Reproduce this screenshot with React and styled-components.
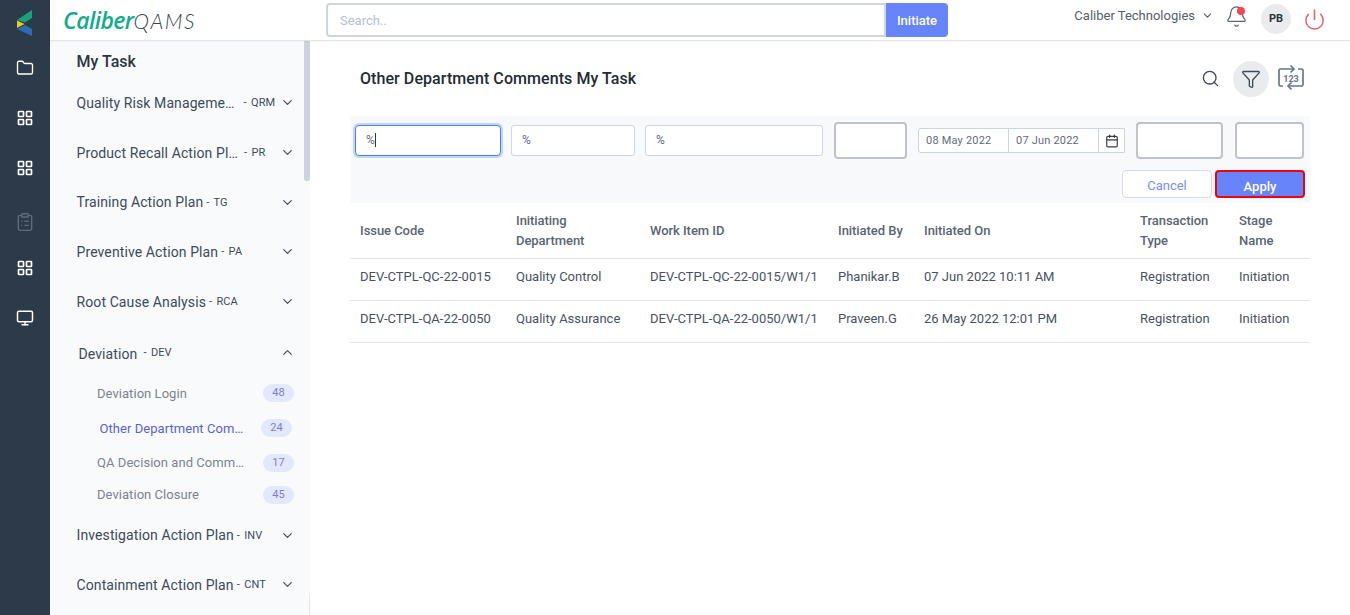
import styled, { createGlobalStyle } from 'styled-components';
import {
  Folder,
  ClipboardList,
  Monitor,
  ChevronDown,
  ChevronUp,
  Bell,
  Power,
  Search,
  Filter,
  Calendar
} from 'lucide-react';

const GlobalStyle = createGlobalStyle`
  html, body {
    margin: 0;
    height: 100%;
    overflow: hidden;
    background: #fff;
    font-family: Roboto, "Liberation Sans", sans-serif;
  }
  * { box-sizing: border-box; }
`;

const Page = styled.div`
  display: flex;
  width: 1350px;
  height: 615px;
  overflow: hidden;
`;

const Rail = styled.nav`
  flex: 0 0 50px;
  display: flex;
  flex-direction: column;
  align-items: center;
  background: #2c3a49;
  padding-top: 10px;
`;

const RailLogo = styled.svg`
  width: 16px;
  height: 26px;
  margin-bottom: 7px;
`;

const RailIcon = styled.div`
  height: 50px;
  display: flex;
  align-items: center;
  justify-content: center;
  padding-top: ${(p) => (p.$dim ? 8 : 0)}px;
  color: ${(p) => (p.$dim ? '#5f6c7a' : '#fff')};
`;

const Main = styled.div`
  flex: 1;
  display: flex;
  flex-direction: column;
  min-width: 0;
`;

const TopBar = styled.header`
  position: relative;
  z-index: 2;
  flex: 0 0 41px;
  display: flex;
  background: #fff;
  border-bottom: 1px solid #e3e5e8;
  box-shadow: 0 1px 2px rgba(0, 0, 0, 0.04);
`;

const Brand = styled.div`
  flex: 0 0 276px;
  padding: 6px 0 0 13px;
  font-size: 23px;
  line-height: 28px;
  font-style: italic;
  white-space: nowrap;
`;

const BrandName = styled.span`
  font-family: "Open Sans", sans-serif;
  font-weight: 600;
  color: #12ab8b;
  letter-spacing: -0.6px;
`;

const BrandProduct = styled.span`
  font-family: Lato, sans-serif;
  font-weight: 300;
  font-size: 21px;
  color: #39434d;
  letter-spacing: 1.6px;
`;

const SearchGroup = styled.div`
  display: flex;
  padding-top: 3px;
  height: 37px;
`;

const SearchField = styled.div`
  width: 560px;
  height: 34px;
  border: 2px solid #cdd6e3;
  border-radius: 4px 0 0 4px;
  padding-left: 12px;
  font-size: 13px;
  line-height: 31px;
  color: #b3c0d8;
`;

const InitiateButton = styled.button`
  width: 62px;
  height: 34px;
  border: 0;
  border-radius: 0 4px 4px 0;
  background: #6884fb;
  color: #fff;
  font: 500 13px Roboto, sans-serif;
`;

const TopRight = styled.div`
  margin-left: auto;
  display: flex;
  align-items: flex-start;
  padding: 4px 24px 0 0;
  color: #555e68;
`;

const Company = styled.div`
  display: flex;
  align-items: center;
  gap: 6px;
  height: 23px;
  font-size: 13px;
  margin-right: 12px;
`;

const BellWrap = styled.div`
  position: relative;
  display: flex;
  justify-content: center;
  width: 20px;
  height: 24px;
  margin: 1px 15px 0 0;
  color: #5b6570;
`;

const BellDot = styled.span`
  position: absolute;
  top: 2px;
  right: 1px;
  width: 8px;
  height: 8px;
  border-radius: 50%;
  background: #f4474f;
`;

const Avatar = styled.div`
  width: 30px;
  height: 30px;
  border-radius: 50%;
  background: #e9ebee;
  color: #2b3138;
  font-size: 11px;
  font-weight: 700;
  line-height: 30px;
  text-align: center;
  margin-right: 12px;
`;

const PowerWrap = styled.div`
  color: #e8606a;
  padding-top: 4px;
`;

const Body = styled.div`
  flex: 1;
  display: flex;
  min-height: 0;
`;

const Sidebar = styled.aside`
  position: relative;
  flex: 0 0 260px;
  background: #f9fafc;
  padding: 10px 0 0 26.5px;
  overflow: hidden;
`;

const ScrollThumb = styled.div`
  position: absolute;
  top: 0;
  right: 0;
  width: 6px;
  height: 140px;
  background: #ced2da;
  border-radius: 0 0 3px 3px;
`;

const SideHeading = styled.h2`
  margin: 0 0 6px;
  font-size: 16px;
  font-weight: 500;
  line-height: 21px;
  color: #2d3640;
`;

const Group = styled.div`
  display: flex;
  align-items: center;
  height: ${(p) => p.$h || 49.7}px;
  padding: 0 15px 0 ${(p) => p.$indent || 0}px;
  font-size: 14px;
  color: #3d4a5a;
  white-space: nowrap;
  letter-spacing: 0.1px;
`;

const GroupCode = styled.span`
  font-size: 11px;
  margin-left: ${(p) => p.$gap || 3}px;
  color: #3d4a5a;
  word-spacing: 1.5px;
`;

const GroupChevron = styled.span`
  margin-left: auto;
  display: flex;
  color: #445161;
`;

const DeviationLabel = styled.span`
  padding-top: 3px;
`;

const SubList = styled.div`
  margin-top: -2px;
`;

const SubItem = styled.div`
  display: flex;
  align-items: center;
  height: ${(p) => p.$h}px;
  padding-left: ${(p) => (p.$active ? 23 : 20.5)}px;
  padding-right: ${(p) => (p.$active ? 18 : 16)}px;
  font-size: 13px;
  color: ${(p) => (p.$active ? '#5a62d8' : '#7b8390')};
  white-space: nowrap;
`;

const SubLabel = styled.span`
  flex: 1;
  letter-spacing: 0.05px;
`;

const Count = styled.span`
  width: 31px;
  height: 18px;
  border-radius: 9px;
  background: #e3e8fb;
  color: #7b80cf;
  font-size: 11px;
  line-height: 17px;
  text-align: center;
`;

const Content = styled.main`
  flex: 1;
  padding: 0 40px 0 40px;
  min-width: 0;
`;

const TitleRow = styled.div`
  display: flex;
  align-items: center;
  height: 75px;
  padding: 0 5px 0 10px;
`;

const Title = styled.h1`
  margin: 0;
  font-size: 16px;
  font-weight: 500;
  color: #232b33;
  letter-spacing: 0.07px;
`;

const TitleTools = styled.div`
  margin-left: auto;
  display: flex;
  align-items: center;
  color: #3f4a57;
`;

const ToolCircle = styled.div`
  width: 36px;
  height: 36px;
  margin: 0 8px 0 13px;
  border-radius: 50%;
  background: #e9ecef;
  display: flex;
  align-items: center;
  justify-content: center;
`;

const FilterPanel = styled.section`
  background: #f8f9fb;
  height: 87px;
  padding: 6px 5px 5px 5px;
  display: flex;
  flex-direction: column;
`;

const FilterRow = styled.div`
  display: flex;
  align-items: center;
  height: 37px;
`;

const TextInput = styled.div`
  width: ${(p) => p.$w}px;
  height: 31px;
  margin-right: ${(p) => p.$gap || 10}px;
  padding-left: 10px;
  background: #fff;
  border: 1px solid #cfd6e3;
  border-radius: 3px;
  font-size: 12px;
  line-height: 29px;
  color: #5f6c80;
`;

const FocusedInput = styled(TextInput)`
  border-color: #5a7bea;
  box-shadow: 0 0 0 2px #bcd8fb;
  border-radius: 4px;
`;

const Caret = styled.span`
  display: inline-block;
  width: 1px;
  height: 14px;
  background: #333;
  vertical-align: -3px;
`;

const SelectBox = styled.div`
  width: ${(p) => p.$w}px;
  height: 37px;
  margin-right: ${(p) => p.$gap}px;
  background: #fff;
  border: 2px solid #bfc3c8;
  border-radius: 4px;
`;

const DateRange = styled.div`
  display: flex;
  width: 207px;
  height: 25px;
  margin-right: 11px;
  background: #fff;
  border: 1px solid #c9d4e4;
  border-radius: 3px 0 0 3px;
  font-size: 11px;
  line-height: 23px;
  color: #5f6c80;
  letter-spacing: 0.2px;
`;

const DateCell = styled.span`
  flex: 0 0 90px;
  padding-left: 7px;
  border-right: 1px solid #c9d4e4;
`;

const DateIcon = styled.span`
  flex: 1;
  display: flex;
  align-items: center;
  justify-content: center;
  color: #333b45;
`;

const ActionRow = styled.div`
  display: flex;
  justify-content: flex-end;
  gap: 3px;
  margin-top: 11px;
`;

const CancelButton = styled.button`
  width: 90px;
  height: 28px;
  padding-top: 4px;
  background: #fff;
  border: 1px solid #d3dbe8;
  border-radius: 4px;
  color: #7e8cf4;
  font: 13px Roboto, sans-serif;
`;

const ApplyButton = styled.button`
  width: 90px;
  height: 28px;
  padding-top: 5px;
  background: #6884fb;
  border: 2px solid #f0000f;
  border-radius: 4px;
  color: #fff;
  font: 500 13px Roboto, sans-serif;
`;

const Table = styled.table`
  width: 960px;
  table-layout: fixed;
  border-collapse: collapse;
  font-size: 13px;
`;

const Th = styled.th`
  height: 55px;
  padding: 2px 4px 0 10px;
  text-align: left;
  font-weight: 500;
  line-height: 20px;
  color: #5a6573;
  letter-spacing: -0.05px;
  border-bottom: 1px solid #e3e6ea;
`;

const Td = styled.td`
  height: 42px;
  padding: 0 0 6px 10px;
  color: #48525f;
  white-space: nowrap;
  border-bottom: 1px solid #e3e6ea;
`;

const CornerLine = styled.div`
  position: absolute;
  right: 0;
  bottom: 0;
  width: 1px;
  height: 20px;
  background: #e3e5e8;
`;

function GridIcon() {
  return (
    <svg width="16" height="16" viewBox="0 0 16 16" fill="none" stroke="#fff" strokeWidth="1.7">
      <rect x="1.5" y="1.5" width="5" height="5" rx="0.6" />
      <rect x="9.5" y="1.5" width="5" height="5" rx="0.6" />
      <rect x="1.5" y="9.5" width="5" height="5" rx="0.6" />
      <rect x="9.5" y="9.5" width="5" height="5" rx="0.6" />
    </svg>
  );
}

function CounterIcon() {
  return (
    <svg width="28" height="28" viewBox="0 0 28 28" fill="none" stroke="#66778c" strokeWidth="1.7">
      <path d="M6 21H3.5A1.5 1.5 0 0 1 2 19.5V5.5A1.5 1.5 0 0 1 3.5 4H17" />
      <path d="M13.5 0.5L17 4l-3.5 3.5" />
      <path d="M21 4h3.5A1.5 1.5 0 0 1 26 5.5v14a1.5 1.5 0 0 1-1.5 1.5H11" />
      <path d="M14.5 17.5L11 21l3.5 3.5" />
      <text x="14" y="16.5" textAnchor="middle" fontSize="9" fontFamily="Roboto, sans-serif" fill="#66778c" stroke="none" fontWeight="700">
        123
      </text>
    </svg>
  );
}

const groupsTop = [
  ['Quality Risk Manageme…', '- QRM', 9],
  ['Product Recall Action Pl…', '- PR', 6],
  ['Training Action Plan', '- TG', 3],
  ['Preventive Action Plan', '- PA', 3],
  ['Root Cause Analysis', '- RCA', 3]
];

const subItems = [
  { label: 'Deviation Login', count: 48, h: 34 },
  { label: 'Other Department Com…', count: 24, h: 36, active: true },
  { label: 'QA Decision and Comm…', count: 17, h: 33 },
  { label: 'Deviation Closure', count: 45, h: 31 }
];

const rows = [
  ['DEV-CTPL-QC-22-0015', 'Quality Control', 'DEV-CTPL-QC-22-0015/W1/1', 'Phanikar.B', '07 Jun 2022 10:11 AM', 'Registration', 'Initiation'],
  ['DEV-CTPL-QA-22-0050', 'Quality Assurance', 'DEV-CTPL-QA-22-0050/W1/1', 'Praveen.G', '26 May 2022 12:01 PM', 'Registration', 'Initiation']
];

const colWidths = [156, 134, 188, 86, 216, 99, 81];

export default function App() {
  return (
    <Page>
      <GlobalStyle />
      <Rail>
        <RailLogo viewBox="0 0 16 26">
          <polygon points="15,0 15,8 8,12.5 0,10" fill="#1aa37a" />
          <polygon points="0,10.5 7.5,14 0,18" fill="#f2c81e" />
          <polygon points="0,19 8,15 15,19 15,26" fill="#2a6db5" />
        </RailLogo>
        <RailIcon><Folder size={18} strokeWidth={1.8} /></RailIcon>
        <RailIcon><GridIcon /></RailIcon>
        <RailIcon><GridIcon /></RailIcon>
        <RailIcon $dim><ClipboardList size={20} strokeWidth={1.7} /></RailIcon>
        <RailIcon><GridIcon /></RailIcon>
        <RailIcon><Monitor size={18} strokeWidth={2} /></RailIcon>
      </Rail>
      <Main>
        <TopBar>
          <Brand>
            <BrandName>Caliber</BrandName>
            <BrandProduct>QAMS</BrandProduct>
          </Brand>
          <SearchGroup>
            <SearchField>Search..</SearchField>
            <InitiateButton>Initiate</InitiateButton>
          </SearchGroup>
          <TopRight>
            <Company>
              Caliber Technologies
              <ChevronDown size={13} />
            </Company>
            <BellWrap>
              <Bell size={23} strokeWidth={1.3} style={{ flexShrink: 0 }} />
              <BellDot />
            </BellWrap>
            <Avatar>PB</Avatar>
            <PowerWrap><Power size={23} strokeWidth={1.6} /></PowerWrap>
          </TopRight>
        </TopBar>
        <Body>
          <Sidebar>
            <ScrollThumb />
            <SideHeading>My Task</SideHeading>
            {groupsTop.map(([name, code, gap]) => (
              <Group key={code}>
                {name}
                <GroupCode $gap={gap}>{code}</GroupCode>
                <GroupChevron><ChevronDown size={15} /></GroupChevron>
              </Group>
            ))}
            <Group $indent={2} $h={52}>
              <DeviationLabel>Deviation</DeviationLabel>
              <GroupCode $gap={6}>- DEV</GroupCode>
              <GroupChevron><ChevronUp size={15} /></GroupChevron>
            </Group>
            <SubList>
              {subItems.map((item) => (
                <SubItem key={item.label} $h={item.h} $active={item.active}>
                  <SubLabel>{item.label}</SubLabel>
                  <Count>{item.count}</Count>
                </SubItem>
              ))}
            </SubList>
            <Group>
              Investigation Action Plan
              <GroupCode>- INV</GroupCode>
              <GroupChevron><ChevronDown size={15} /></GroupChevron>
            </Group>
            <Group>
              Containment Action Plan
              <GroupCode>- CNT</GroupCode>
              <GroupChevron><ChevronDown size={15} /></GroupChevron>
            </Group>
            <CornerLine />
          </Sidebar>
          <Content>
            <TitleRow>
              <Title>Other Department Comments My Task</Title>
              <TitleTools>
                <Search size={19} strokeWidth={1.7} />
                <ToolCircle><Filter size={20} strokeWidth={1.6} /></ToolCircle>
                <CounterIcon />
              </TitleTools>
            </TitleRow>
            <FilterPanel>
              <FilterRow>
                <FocusedInput $w={146}>%<Caret /></FocusedInput>
                <TextInput $w={124}>%</TextInput>
                <TextInput $w={178} $gap={11}>%</TextInput>
                <SelectBox $w={73} $gap={11} />
                <DateRange>
                  <DateCell>08 May 2022</DateCell>
                  <DateCell>07 Jun 2022</DateCell>
                  <DateIcon><Calendar size={14} /></DateIcon>
                </DateRange>
                <SelectBox $w={87} $gap={12} />
                <SelectBox $w={69} $gap={0} />
              </FilterRow>
              <ActionRow>
                <CancelButton>Cancel</CancelButton>
                <ApplyButton>Apply</ApplyButton>
              </ActionRow>
            </FilterPanel>
            <Table>
              <colgroup>
                {colWidths.map((w, i) => <col key={i} width={w} />)}
              </colgroup>
              <thead>
                <tr>
                  <Th>Issue Code</Th>
                  <Th>Initiating Department</Th>
                  <Th>Work Item ID</Th>
                  <Th>Initiated By</Th>
                  <Th>Initiated On</Th>
                  <Th>Transaction Type</Th>
                  <Th>Stage Name</Th>
                </tr>
              </thead>
              <tbody>
                {rows.map((row) => (
                  <tr key={row[0]}>
                    {row.map((cell) => <Td key={cell}>{cell}</Td>)}
                  </tr>
                ))}
              </tbody>
            </Table>
          </Content>
        </Body>
      </Main>
    </Page>
  );
}
